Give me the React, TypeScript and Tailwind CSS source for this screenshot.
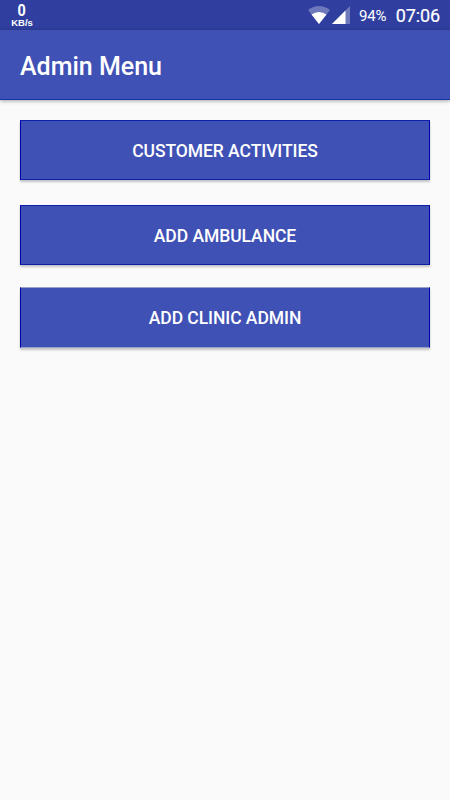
import React from "react";

const menuItems = [
  {
    label: "Customer Activities",
    className: "h-[60px] border-y-[#0d22a8] pt-[2px]",
  },
  {
    label: "Add Ambulance",
    className: "mt-[25px] h-[60px] border-y-[#0d22a8] pt-[2px]",
  },
  {
    label: "Add Clinic Admin",
    className: "mt-[22px] h-[61px] border-y-[#98a0cc] pt-[2px]",
  },
];

function StatusBar() {
  return (
    <div className="flex h-[30px] items-center justify-between bg-[#303f9f] pr-[10px] pl-[11px]">
      <div className="flex w-[22px] flex-col items-center font-bold">
        <span className="inline-block scale-x-90 text-[16px] leading-[14px]">
          0
        </span>
        <span className="font-['Liberation_Sans',sans-serif] text-[9.5px] leading-[9px]">
          KB/s
        </span>
      </div>
      <div className="flex items-center">
        {/* Wifi */}
        <svg className="h-[18px] w-[22px]" viewBox="0 0 22 18">
          <path d="M0 4Q11 -4 22 4L11 18Z" fill="#fff" fillOpacity="0.3" />
          <path d="M3.5 8.5Q11 3.5 18.5 8.5L11 18Z" fill="#fff" />
        </svg>
        {/* Signal */}
        <svg className="ml-[2px] h-[18px] w-[18px]" viewBox="0 0 18 18">
          <path d="M0 18L18 0V18Z" fill="#fff" fillOpacity="0.3" />
          <path d="M0 18L13.5 4.5V18Z" fill="#fff" />
        </svg>
        <span className="ml-[9px] pt-[2px] text-[15px] tracking-[-0.2px]">
          94%
        </span>
        <span className="ml-[9.5px] text-[18px] tracking-[-0.1px] [-webkit-text-stroke:0.2px_white]">
          07:06
        </span>
      </div>
    </div>
  );
}

export default function App() {
  return (
    <div className="min-h-screen bg-[#fafafa] font-['Roboto',sans-serif] text-white">
      <StatusBar />
      <header className="flex h-[70px] items-center border-b border-[#0d35a8] bg-[#3f51b5] px-5 pt-[4px] shadow-[0_1px_4px_rgba(0,0,0,0.35)]">
        <h1 className="text-[25px] font-medium">Admin Menu</h1>
      </header>
      <main className="flex flex-col px-5 pt-5">
        {menuItems.map((item) => (
          <button
            key={item.label}
            className={`border border-x-[#0000a8] bg-[#3f51b5] text-[17.5px] font-medium tracking-[-0.06px] uppercase shadow-[0_2px_2px_rgba(0,0,0,0.22)] ${item.className}`}
          >
            {item.label}
          </button>
        ))}
      </main>
    </div>
  );
}
